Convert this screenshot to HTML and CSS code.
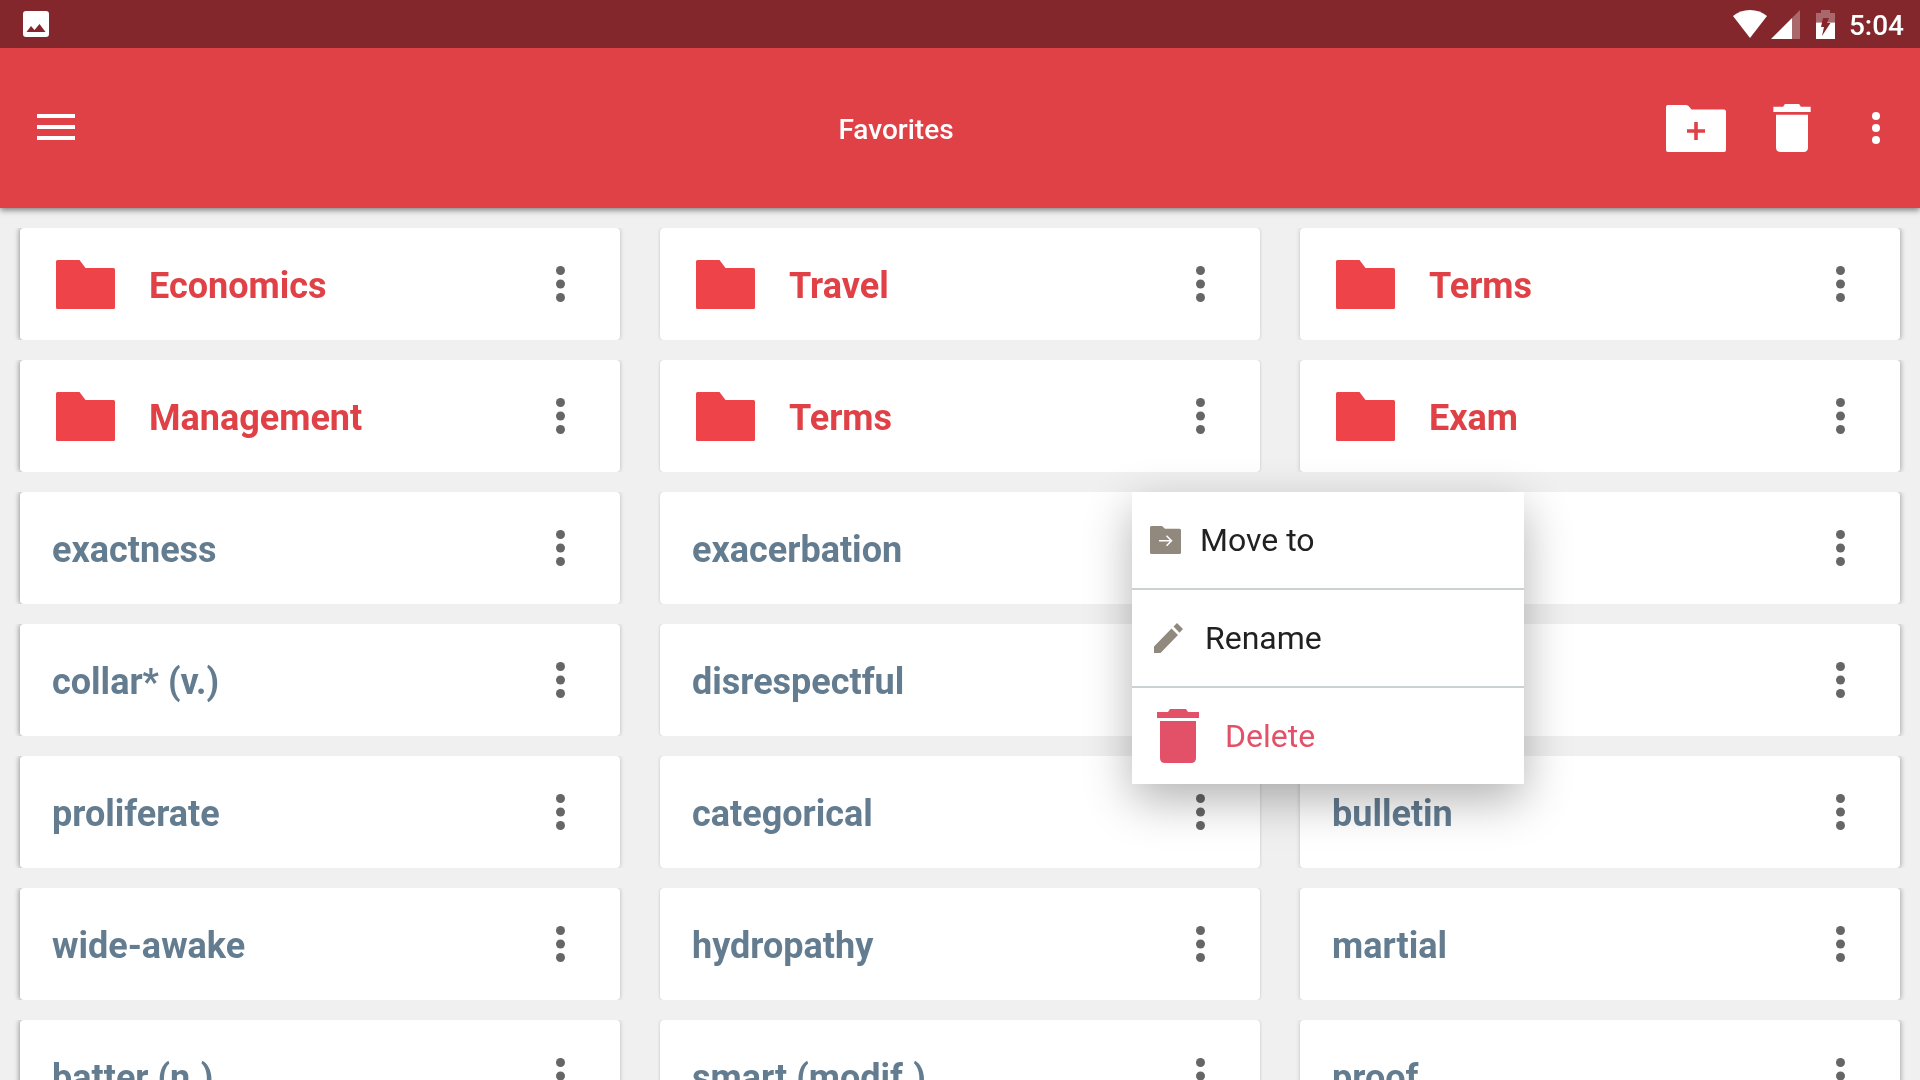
FILE: index.html
```html
<!DOCTYPE html>
<html lang="en">

<head>
    <meta charset="UTF-8">
    <meta name="viewport" content="width=device-width, initial-scale=1.0">
    <title>Favorites</title>
    <link rel="stylesheet" href="styles.css">
</head>

<body>
    <svg class="sprite" aria-hidden="true">
        <symbol id="folder" viewBox="0 0 59 49">
            <path d="M1.500 0H23.500L29.500 8H57.500Q59 8 59 9.500V47.500Q59 49 57.500 49H1.500Q0 49 0 47.500V1.500Q0 0 1.500 0Z" />
        </symbol>
        <symbol id="trash" viewBox="0 0 42 54">
            <path d="M0 3H11L13 0H29L31 3H42V9H0ZM3 12H39V49Q39 54 34 54H8Q3 54 3 49Z" />
        </symbol>
        <symbol id="dots" viewBox="0 0 9 36">
            <circle cx="4.500" cy="4.500" r="4.500" />
            <circle cx="4.500" cy="18" r="4.500" />
            <circle cx="4.500" cy="31.500" r="4.500" />
        </symbol>
    </svg>

    <div class="status-bar">
        <svg class="status-picture" width="26" height="26" viewBox="0 0 26 26">
            <path fill-rule="evenodd" d="M3 0H23Q26 0 26 3V23Q26 26 23 26H3Q0 26 0 23V3Q0 0 3 0ZM3.500 21H22.500L16.500 13L11.500 19L8 15Z" />
        </svg>
        <div class="status-icons">
            <svg width="34" height="28" viewBox="0 0 34 28">
                <path d="M17 28L0 6Q7 0 17 0T34 6Z" />
            </svg>
            <svg class="signal" width="29" height="29" viewBox="0 0 29 29">
                <path opacity="0.3" d="M21 8L29 0V29H21Z" />
                <path d="M0 29L21 8V29Z" />
            </svg>
            <svg class="battery" width="19" height="29" viewBox="0 0 19 29">
                <path opacity="0.3" d="M0 3H5V0H14V3H19V12.500H0Z" />
                <path d="M0 12.500H19V29H0Z" />
                <path fill="#84272c" d="M7 8H13L11 13H14.500L6 26L8 17H5Z" />
            </svg>
        </div>
        <time class="clock">5:04</time>
    </div>

    <header class="app-bar">
        <button class="bar-button bar-menu" type="button" aria-label="Menu">
            <svg width="38" height="28" viewBox="0 0 38 28">
                <path d="M0 0H38V4H0ZM0 11H38V15H0ZM0 22H38V26H0Z" />
            </svg>
        </button>
        <h1>Favorites</h1>
        <button class="bar-button" type="button" aria-label="New folder">
            <svg width="60" height="47" viewBox="0 0 60 47">
                <path d="M2 0H20Q22 0 23 1.500L25.500 4.500H58Q60 4.500 60 6.500V45Q60 47 58 47H2Q0 47 0 45V2Q0 0 2 0Z" />
                <path class="plus" d="M28.200 17H31.800V24.200H39V27.800H31.800V35H28.200V27.800H21V24.200H28.200Z" />
            </svg>
        </button>
        <button class="bar-button" type="button" aria-label="Delete">
            <svg width="38" height="48"><use href="#trash" /></svg>
        </button>
        <button class="bar-button bar-more" type="button" aria-label="More">
            <svg width="8" height="32"><use href="#dots" /></svg>
        </button>
    </header>

    <main class="cards">
        <article class="card card-folder">
            <svg class="folder"><use href="#folder" /></svg>
            <h2>Economics</h2>
            <button class="more" type="button" aria-label="More"><svg><use href="#dots" /></svg></button>
        </article>
        <article class="card card-folder">
            <svg class="folder"><use href="#folder" /></svg>
            <h2>Travel</h2>
            <button class="more" type="button" aria-label="More"><svg><use href="#dots" /></svg></button>
        </article>
        <article class="card card-folder">
            <svg class="folder"><use href="#folder" /></svg>
            <h2>Terms</h2>
            <button class="more" type="button" aria-label="More"><svg><use href="#dots" /></svg></button>
        </article>
        <article class="card card-folder">
            <svg class="folder"><use href="#folder" /></svg>
            <h2>Management</h2>
            <button class="more" type="button" aria-label="More"><svg><use href="#dots" /></svg></button>
        </article>
        <article class="card card-folder">
            <svg class="folder"><use href="#folder" /></svg>
            <h2>Terms</h2>
            <button class="more" type="button" aria-label="More"><svg><use href="#dots" /></svg></button>
        </article>
        <article class="card card-folder">
            <svg class="folder"><use href="#folder" /></svg>
            <h2>Exam</h2>
            <button class="more" type="button" aria-label="More"><svg><use href="#dots" /></svg></button>
        </article>
        <article class="card">
            <h2>exactness</h2>
            <button class="more" type="button" aria-label="More"><svg><use href="#dots" /></svg></button>
        </article>
        <article class="card">
            <h2>exacerbation</h2>
            <button class="more" type="button" aria-label="More"><svg><use href="#dots" /></svg></button>
            <div class="popup">
                <button class="popup-item" type="button">
                    <span class="popup-icon icon-move">
                        <svg width="31" height="28" viewBox="0 0 31 28">
                            <path d="M1.500 0H12L15 2.700H29.500Q31 2.700 31 4.200V26.500Q31 28 29.500 28H1.500Q0 28 0 26.500V1.500Q0 0 1.500 0Z" />
                            <path class="arrow" d="M9 14.700H21.500M16.500 9.700L21.500 14.700L16.500 19.700" />
                        </svg>
                    </span>
                    Move to
                </button>
                <button class="popup-item" type="button">
                    <span class="popup-icon icon-rename">
                        <svg width="29" height="30" viewBox="0 0 29 30">
                            <path d="M0 23.500L17.500 5.500L24 12L6.500 30H0ZM19.500 3.500L23 0L29 6L25.500 9.800Z" />
                        </svg>
                    </span>
                    Rename
                </button>
                <button class="popup-item popup-delete" type="button">
                    <span class="popup-icon icon-delete">
                        <svg width="42" height="54"><use href="#trash" /></svg>
                    </span>
                    Delete
                </button>
            </div>
        </article>
        <article class="card">
            <button class="more" type="button" aria-label="More"><svg><use href="#dots" /></svg></button>
        </article>
        <article class="card">
            <h2>collar* (v.)</h2>
            <button class="more" type="button" aria-label="More"><svg><use href="#dots" /></svg></button>
        </article>
        <article class="card">
            <h2>disrespectful</h2>
            <button class="more" type="button" aria-label="More"><svg><use href="#dots" /></svg></button>
        </article>
        <article class="card">
            <button class="more" type="button" aria-label="More"><svg><use href="#dots" /></svg></button>
        </article>
        <article class="card">
            <h2>proliferate</h2>
            <button class="more" type="button" aria-label="More"><svg><use href="#dots" /></svg></button>
        </article>
        <article class="card">
            <h2>categorical</h2>
            <button class="more" type="button" aria-label="More"><svg><use href="#dots" /></svg></button>
        </article>
        <article class="card">
            <h2>bulletin</h2>
            <button class="more" type="button" aria-label="More"><svg><use href="#dots" /></svg></button>
        </article>
        <article class="card">
            <h2>wide-awake</h2>
            <button class="more" type="button" aria-label="More"><svg><use href="#dots" /></svg></button>
        </article>
        <article class="card">
            <h2>hydropathy</h2>
            <button class="more" type="button" aria-label="More"><svg><use href="#dots" /></svg></button>
        </article>
        <article class="card">
            <h2>martial</h2>
            <button class="more" type="button" aria-label="More"><svg><use href="#dots" /></svg></button>
        </article>
        <article class="card">
            <h2>batter (n.)</h2>
            <button class="more" type="button" aria-label="More"><svg><use href="#dots" /></svg></button>
        </article>
        <article class="card">
            <h2>smart (modif.)</h2>
            <button class="more" type="button" aria-label="More"><svg><use href="#dots" /></svg></button>
        </article>
        <article class="card">
            <h2>proof</h2>
            <button class="more" type="button" aria-label="More"><svg><use href="#dots" /></svg></button>
        </article>
    </main>
</body>

</html>
```

FILE: styles.css
```css
:root {
    --color-primary: #e04146;
    --color-primary-dark: #84272c;
    --color-folder: #ee4449;
    --color-word: #637c90;
    --color-delete: #e35168;
}

* {
    box-sizing: border-box;
}

body {
    margin: 0;
    height: 100vh;
    display: flex;
    flex-direction: column;
    overflow: hidden;
    background-color: #f0f0f0;
    font-family: Roboto, sans-serif;
}

button {
    margin: 0;
    padding: 0;
    border: 0;
    background: none;
    font: inherit;
    color: inherit;
    cursor: pointer;
}

svg {
    display: block;
    fill: currentColor;
}

h1,
h2 {
    margin: 0;
}

.sprite {
    display: none;
}

.status-bar {
    display: flex;
    flex-shrink: 0;
    align-items: center;
    height: 48px;
    padding: 0 16px 0 23px;
    background-color: var(--color-primary-dark);
    color: #fff;
    z-index: 2;
}

.status-icons {
    display: flex;
    align-items: center;
    gap: 4px;
    margin-left: auto;
}

.battery {
    margin-left: 12px;
}

.clock {
    margin-left: 14px;
    padding-top: 2px;
    font-size: 28px;
    font-weight: 500;
}

.app-bar {
    display: flex;
    flex-shrink: 0;
    align-items: center;
    height: 160px;
    padding-right: 8px;
    background-color: var(--color-primary);
    box-shadow: 0 2px 6px rgb(0 0 0 / 50%);
    color: #fff;
    z-index: 1;

    h1 {
        flex: 1;
        padding: 2px 0 0 32px;
        font-size: 28px;
        font-weight: 500;
        text-align: center;
    }
}

.bar-button {
    display: grid;
    place-items: center;
    width: 96px;
    height: 96px;
}

.bar-menu {
    width: 112px;
}

.bar-more {
    width: 72px;
}

.plus {
    fill: var(--color-primary);
}

.cards {
    flex: 1;
    display: grid;
    grid-template-columns: repeat(3, 1fr);
    grid-auto-rows: 112px;
    gap: 20px 40px;
    padding: 20px;
    overflow-y: auto;
    scrollbar-width: none;
}

.card {
    --shadow: 0 0 3px rgb(0 0 0 / 20%);
    position: relative;
    display: flex;
    align-items: center;
    padding-left: 32px;
    color: var(--color-word);

    /* the shadow shows only at the sides */
    &::before {
        content: '';
        position: absolute;
        inset: 0;
        z-index: -1;
        border-radius: 4px;
        background-color: #fff;
        box-shadow: var(--shadow);
        clip-path: inset(0 -10px);
    }

    h2 {
        padding-top: 4px;
        font-size: 36px;
        font-weight: 700;
    }
}

.card:nth-child(3n+1) {
    --shadow: -1px 0 5px rgb(0 0 0 / 36%);
}

.card:nth-child(3n) {
    --shadow: 1px 0 5px rgb(0 0 0 / 30%);
}

.card-folder {
    padding-left: 36px;
    color: var(--color-primary);
}

.folder {
    width: 59px;
    height: 49px;
    margin-right: 34px;
    color: var(--color-folder);
}

.more {
    display: grid;
    place-items: center;
    width: 119px;
    height: 100%;
    margin-left: auto;
    color: #666;

    svg {
        width: 9px;
        height: 36px;
    }
}

.popup {
    position: absolute;
    top: 0;
    right: -264px;
    z-index: 2;
    width: 392px;
    background-color: #fff;
    box-shadow: 0 16px 44px rgb(0 0 0 / 30%);
    color: #212121;
    font-size: 32px;
}

.popup-item {
    display: flex;
    align-items: center;
    width: 100%;
    height: 96px;
}

.popup-item:not(:last-child) {
    height: 98px;
    border-bottom: 2px solid #ccd1d4;
}

.popup-icon {
    color: #91897e;
}

.icon-move {
    padding: 0 19px 0 18px;
}

.icon-rename {
    padding: 0 22px;
}

.icon-delete {
    padding: 0 26px 0 25px;
    color: var(--color-delete);
}

.popup-delete {
    color: var(--color-delete);
}

.arrow {
    fill: none;
    stroke: #fff;
    stroke-width: 1.5;
}
```
